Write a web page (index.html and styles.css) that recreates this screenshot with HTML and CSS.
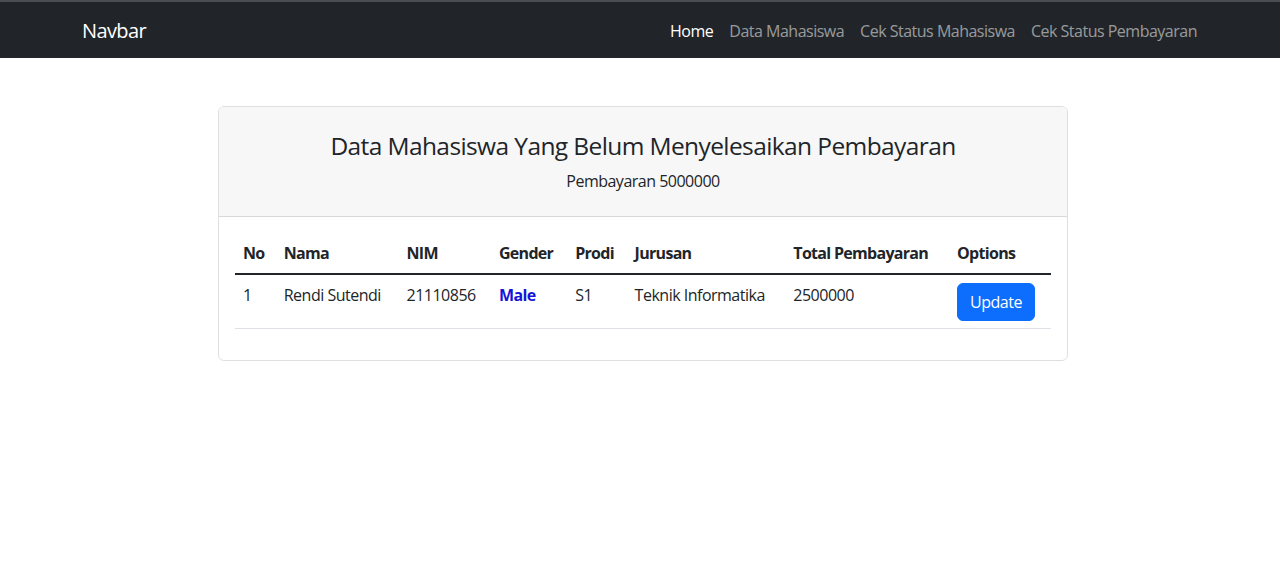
FILE: index.html
```html
<!DOCTYPE html>
<html lang="id">
<head>
<meta charset="utf-8">
<title>Data Mahasiswa</title>
<link rel="stylesheet" href="styles.css">
</head>
<body>
<nav class="navbar">
  <div class="container nav-inner">
    <a class="brand" href="#">Navbar</a>
    <ul class="nav-links">
      <li><a class="nav-link active" href="#">Home</a></li>
      <li><a class="nav-link" href="#">Data Mahasiswa</a></li>
      <li><a class="nav-link" href="#">Cek Status Mahasiswa</a></li>
      <li><a class="nav-link" href="#">Cek Status Pembayaran</a></li>
    </ul>
  </div>
</nav>
<main class="container main">
  <div class="card">
    <div class="card-header">
      <h3 class="title">Data Mahasiswa Yang Belum Menyelesaikan Pembayaran</h3>
      <p class="subtitle">Pembayaran 5000000</p>
    </div>
    <div class="card-body">
      <table class="table">
        <thead>
          <tr>
            <th>No</th>
            <th>Nama</th>
            <th>NIM</th>
            <th>Gender</th>
            <th>Prodi</th>
            <th>Jurusan</th>
            <th>Total Pembayaran</th>
            <th>Options</th>
          </tr>
        </thead>
        <tbody>
          <tr>
            <td>1</td>
            <td>Rendi Sutendi</td>
            <td>21110856</td>
            <td><span class="male">Male</span></td>
            <td>S1</td>
            <td>Teknik Informatika</td>
            <td>2500000</td>
            <td><button class="btn" type="button">Update</button></td>
          </tr>
        </tbody>
      </table>
    </div>
  </div>
</main>
</body>
</html>
```
FILE: styles.css
```css
* { box-sizing: border-box; }
body {
  margin: 0;
  font-family: "Open Sans", "Noto Sans", sans-serif;
  font-size: 16px;
  line-height: 1.5;
  letter-spacing: -0.5px;
  color: #212529;
  background: #fff;
}
.container {
  width: 1140px;
  margin: 0 auto;
  padding: 0 12px;
}
.navbar {
  background: #212529;
  border-top: 2px solid #4a4d51;
  padding: 9px 0 7px;
}
.nav-inner {
  display: flex;
  align-items: center;
  justify-content: space-between;
}
.brand {
  font-size: 20px;
  line-height: 30px;
  padding: 5px 0;
  letter-spacing: -0.6px;
  color: #fff;
  text-decoration: none;
}
.nav-links {
  display: flex;
  list-style: none;
  margin: 0 -7px 0 0;
  padding: 0;
}
.nav-link {
  display: block;
  padding: 8px;
  letter-spacing: -0.5px;
  color: rgba(255,255,255,.55);
  text-decoration: none;
}
.nav-link.active { color: #fff; }
.main { padding-top: 48px; padding-left: 148px; padding-right: 142px; }
.card {
  border: 1px solid rgba(0,0,0,.125);
  border-radius: 6px;
  overflow: hidden;
}
.card-header {
  background: #f7f7f7;
  border-bottom: 1px solid rgba(0,0,0,.125);
  padding: 22px 16px 8px;
  text-align: center;
}
.title {
  margin: 0 0 6px;
  font-size: 24.5px;
  font-weight: 500;
  line-height: 34px;
  letter-spacing: -0.6px;
}
.subtitle { margin: 0 0 15px; }
.card-body { padding: 16px; }
.table {
  width: 100%;
  border-collapse: collapse;
  margin-bottom: 15px;
}
.table th, .table td {
  padding: 8px;
  text-align: left;
  vertical-align: top;
  border-bottom: 1px solid #dee2e6;
}
.table th {
  font-weight: 700;
  letter-spacing: -0.7px;
  border-bottom: 2px solid #212529;
}
.table td { padding-bottom: 7px; }
.male { color: #1515d6; font-weight: 700; letter-spacing: -0.6px; }
.btn {
  font-family: inherit;
  font-size: 16px;
  line-height: 1.5;
  letter-spacing: -0.5px;
  color: #fff;
  background: #0d6efd;
  border: 1px solid #0d6efd;
  border-radius: 6px;
  padding: 6px 12px;
}
```
